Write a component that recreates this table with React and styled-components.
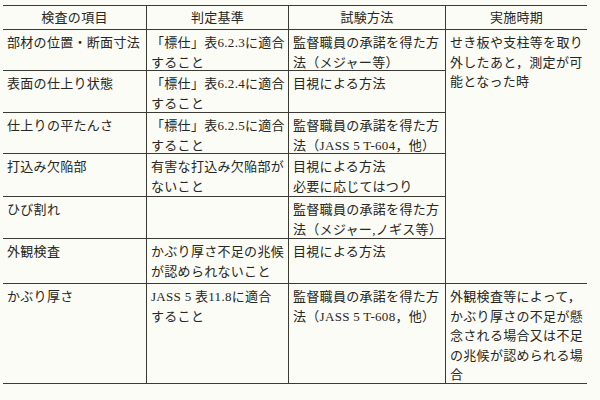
import React from "react";
import styled, { createGlobalStyle } from "styled-components";

const Global = createGlobalStyle`
  html, body { margin: 0; padding: 0; background: #fcfcf6; }
  body { width: 600px; height: 400px; overflow: hidden; }
`;

const Sheet = styled.div`
  padding: 5px 0 0 3px;
  font-family: "Liberation Serif", "Noto Sans CJK JP", serif;
  font-size: 13px;
  letter-spacing: 0.3px;
  color: #262622;
`;

const Grid = styled.div`
  display: grid;
  width: 584px;
  grid-template-columns: 144px 142px 157px 141px;
  grid-template-rows: 24px 41px 42px 41px 43px 42px 45px 100px;
  border-top: 1px solid #3b3b33;
  box-sizing: border-box;
`;

const Cell = styled.div`
  box-sizing: border-box;
  border-bottom: 1px solid #3b3b33;
  border-right: ${(p) => (p.$last ? "none" : "1px solid #3b3b33")};
  grid-row: ${(p) => (p.$span ? `span ${p.$span}` : "auto")};
  padding: 3px 0 0 4px;
  line-height: 19.5px;
  white-space: nowrap;
  overflow: visible;
`;

const Head = styled(Cell)`
  padding: 0;
  display: flex;
  align-items: center;
  justify-content: center;
  line-height: 20px;
`;

const Line = styled.div``;

const rows = [
  {
    item: ["部材の位置・断面寸法"],
    crit: ["「標仕」表6.2.3に適合", "すること"],
    method: ["監督職員の承諾を得た方", "法（メジャー等）"],
  },
  {
    item: ["表面の仕上り状態"],
    crit: ["「標仕」表6.2.4に適合", "すること"],
    method: ["目視による方法"],
  },
  {
    item: ["仕上りの平たんさ"],
    crit: ["「標仕」表6.2.5に適合", "すること"],
    method: ["監督職員の承諾を得た方", "法（JASS 5 T-604，他）"],
  },
  {
    item: ["打込み欠陥部"],
    crit: ["有害な打込み欠陥部が", "ないこと"],
    method: ["目視による方法", "必要に応じてはつり"],
  },
  {
    item: ["ひび割れ"],
    crit: [],
    method: ["監督職員の承諾を得た方", "法（メジャー,ノギス等）"],
  },
  {
    item: ["外観検査"],
    crit: ["かぶり厚さ不足の兆候", "が認められないこと"],
    method: ["目視による方法"],
  },
];

const firstTiming = ["せき板や支柱等を取り", "外したあと，測定が可", "能となった時"];

const last = {
  item: ["かぶり厚さ"],
  crit: ["JASS 5 表11.8に適合", "すること"],
  method: ["監督職員の承諾を得た方", "法（JASS 5 T-608，他）"],
  timing: [
    "外観検査等によって，",
    "かぶり厚さの不足が懸",
    "念される場合又は不足",
    "の兆候が認められる場",
    "合",
  ],
};

const Lines = ({ lines }) => lines.map((t, i) => <Line key={i}>{t}</Line>);

export default function App() {
  return (
    <>
      <Global />
      <Sheet>
        <Grid>
          <Head>検査の項目</Head>
          <Head>判定基準</Head>
          <Head>試験方法</Head>
          <Head $last>実施時期</Head>
          {rows.map((r, i) => (
            <React.Fragment key={i}>
              <Cell><Lines lines={r.item} /></Cell>
              <Cell><Lines lines={r.crit} /></Cell>
              <Cell><Lines lines={r.method} /></Cell>
              {i === 0 && (
                <Cell $last $span={6}><Lines lines={firstTiming} /></Cell>
              )}
            </React.Fragment>
          ))}
          <Cell><Lines lines={last.item} /></Cell>
          <Cell><Lines lines={last.crit} /></Cell>
          <Cell><Lines lines={last.method} /></Cell>
          <Cell $last><Lines lines={last.timing} /></Cell>
        </Grid>
      </Sheet>
    </>
  );
}
